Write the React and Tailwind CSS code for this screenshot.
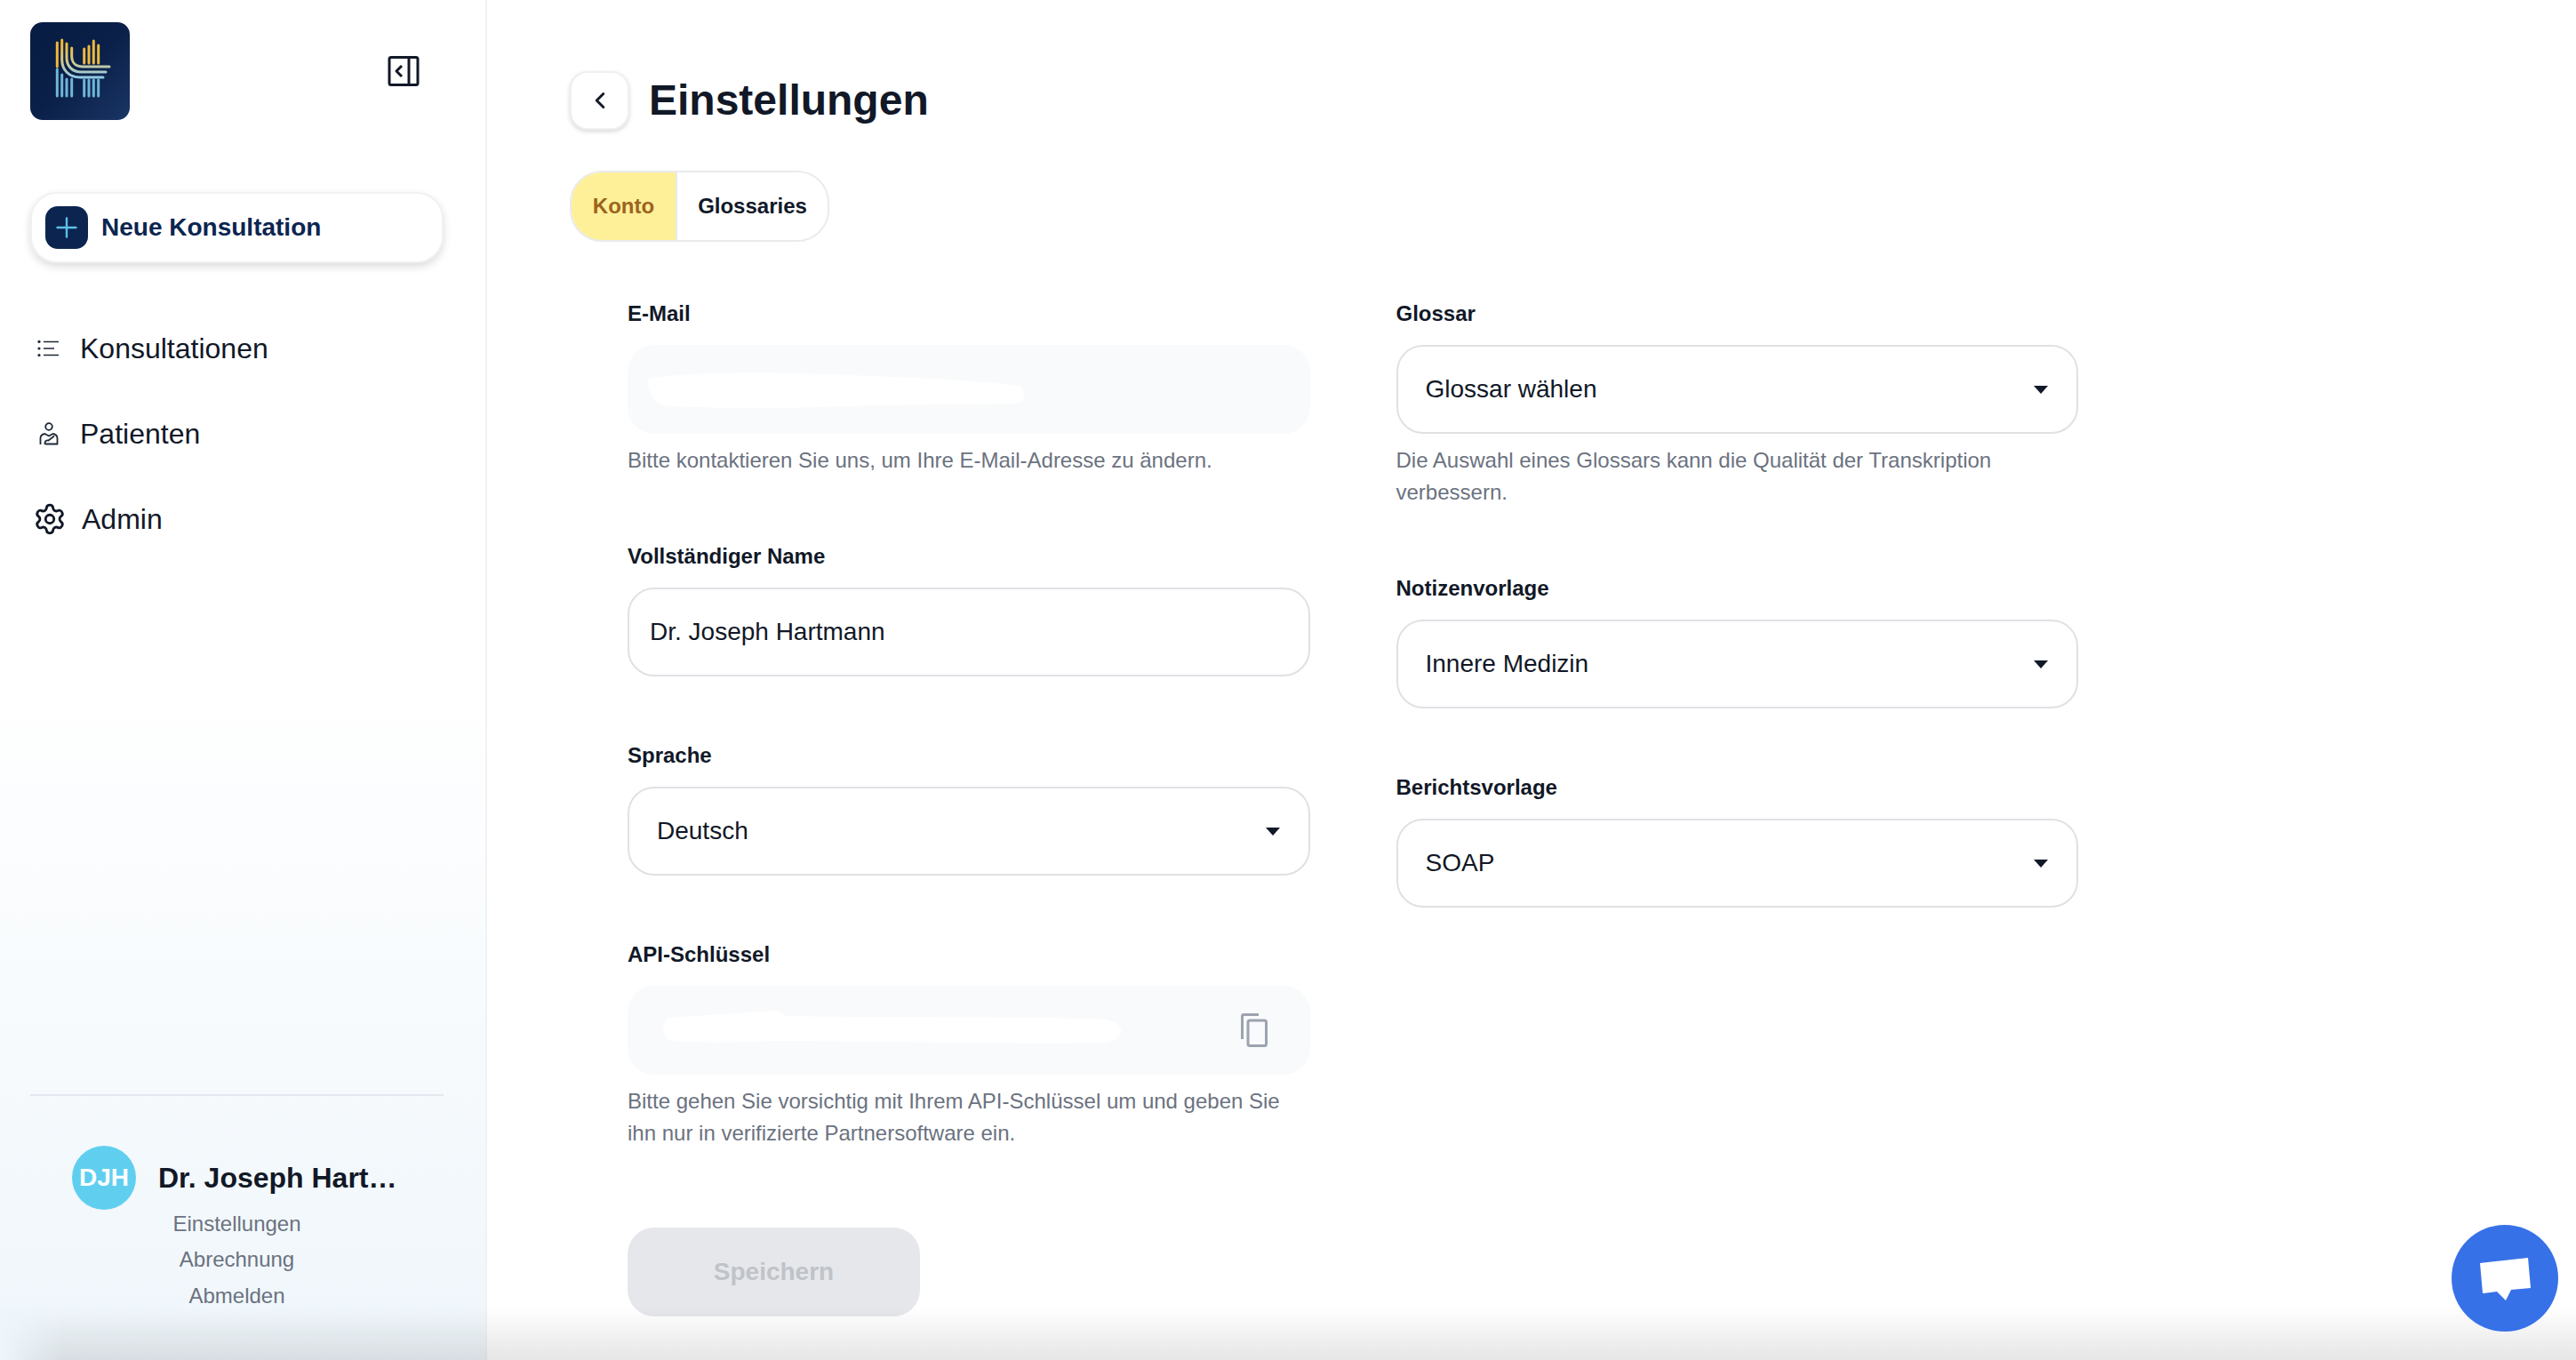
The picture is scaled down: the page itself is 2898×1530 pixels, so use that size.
import React from 'react';
import { Settings, ChevronLeft, Plus } from 'lucide-react';

const Logo = () => (
  <div className="w-[112px] h-[110px] rounded-[14px] bg-gradient-to-br from-[#071c42] via-[#0a2048] to-[#1a3565] shrink-0">
    <svg width="112" height="110" viewBox="0 0 112 110" fill="none" strokeWidth="3" strokeLinecap="round">
      <defs>
        <linearGradient id="logoLine" gradientUnits="userSpaceOnUse" x1="0" y1="22" x2="0" y2="62">
          <stop offset="0" stopColor="#f2b632" />
          <stop offset="0.55" stopColor="#d5c98a" />
          <stop offset="1" stopColor="#8fcbe6" />
        </linearGradient>
      </defs>
      <path d="M30.3 23V50" stroke="#f0b838" />
      <path d="M35.7 20V42C35.7 54 44 62 56 62H82" stroke="url(#logoLine)" />
      <path d="M41 24V40C41 49 47 56 57 56H85" stroke="url(#logoLine)" />
      <path d="M46.7 29V38C46.7 45 51 50 59 50H89" stroke="url(#logoLine)" />
      <path d="M60.7 30V46M66 27V46M71.3 21V46M76.7 26V46" stroke="#eeb93f" />
      <path d="M30.3 53V83M35.7 59V83M41 64V83M46.7 64V83M60.7 65V83M66 65V83M71.3 65V83M76.7 65V83" stroke="#6fb6d8" />
    </svg>
  </div>
);

const CollapseIcon = () => (
  <svg width="36" height="34" viewBox="0 0 36 34" fill="none" stroke="#111827" strokeWidth="3" strokeLinejoin="round">
    <rect x="2" y="1.5" width="32" height="31" rx="2" />
    <path d="M24 2V32" />
    <path d="M16 11L10 17L16 23" />
  </svg>
);

const ListIcon = () => (
  <svg width="24" height="18" viewBox="0 0 24 18" fill="none" stroke="#1f2937" strokeWidth="1.6">
    <circle cx="2" cy="1.5" r="1.6" fill="#1f2937" stroke="none" />
    <circle cx="2" cy="9" r="1.6" fill="#1f2937" stroke="none" />
    <circle cx="2" cy="16.5" r="1.6" fill="#1f2937" stroke="none" />
    <path d="M7 1.5H24M7 9H19M7 16.5H24" />
  </svg>
);

const PatientIcon = () => (
  <svg width="22" height="26" viewBox="0 0 22 26" fill="none" stroke="#1f2937" strokeWidth="1.8" strokeLinejoin="round">
    <circle cx="11" cy="5" r="3.8" />
    <path d="M1.5 25V18C1.5 15 3.5 13.5 6.5 13L11 15.5L15.5 13C18.5 13.5 20.5 15 20.5 18V24.5H7" />
    <path d="M6.5 25C6 21.5 8 20 10.5 20.5L17 15.5" />
  </svg>
);

const CopyIcon = () => (
  <svg width="30" height="38" viewBox="0 0 30 38" fill="none" stroke="#9ca3af" strokeWidth="3">
    <path d="M1.5 29V3C1.5 2 2 1.5 3 1.5H20" />
    <rect x="8" y="8" width="20.5" height="28.5" rx="2" />
  </svg>
);

const ChatIcon = () => (
  <svg width="60" height="52" viewBox="0 0 60 52" fill="white">
    <path d="M2 6L56 0L59 34L37 36L31 48L21 38L5 40Z" />
  </svg>
);

const Caret = () => <span className="w-0 h-0 border-x-[8px] border-x-transparent border-t-[9px] border-t-[#111827]" />;

const Label = ({ children }) => (
  <div className="text-[24px] leading-[36px] font-bold text-[#111827] mb-[17px]">{children}</div>
);

const Help = ({ children }) => (
  <p className="mt-[12px] mb-[1px] text-[24px] leading-[36px] text-[#6b7280]">{children}</p>
);

const SelectField = ({ label, value, help }) => (
  <div>
    <Label>{label}</Label>
    <div className="h-[100px] rounded-[30px] border-2 border-[#dfe1e4] bg-white pl-[31px] pr-[32px] flex items-center justify-between">
      <span className="text-[28px] text-[#111827]">{value}</span>
      <Caret />
    </div>
    {help && <Help>{help}</Help>}
  </div>
);

const navItems = [
  { icon: <ListIcon />, label: 'Konsultationen', box: 'w-[50px] pl-[2px]', gap: 'ml-0' },
  { icon: <PatientIcon />, label: 'Patienten', box: 'w-[50px] pl-[4px]', gap: 'ml-0' },
  { icon: <Settings size={38} strokeWidth={1.8} color="#111827" />, label: 'Admin', box: 'w-[50px] -ml-[3px]', gap: 'ml-[5px]' },
];

const Sidebar = () => (
  <aside className="w-[548px] h-full shrink-0 border-r-2 border-[#f1f2f4] bg-gradient-to-b from-white via-white to-[#eff6fb] pl-[34px] pr-[47px] pt-[25px] flex flex-col">
    <div className="flex items-center justify-between pr-[27px]">
      <Logo />
      <CollapseIcon />
    </div>
    <button className="mt-[81px] h-[80px] w-[465px] rounded-[30px] bg-white border-2 border-[#f1f1f3] shadow-[0_4px_10px_rgba(0,0,0,0.14)] flex items-center pl-[15px] gap-[15px]">
      <span className="w-[48px] h-[48px] rounded-[14px] bg-[#0b2550] flex items-center justify-center">
        <Plus size={36} strokeWidth={1.6} color="#5cc0e6" />
      </span>
      <span className="text-[28px] font-bold text-[#0b2550]">Neue Konsultation</span>
    </button>
    <nav className="mt-[72px] flex flex-col gap-[48px]">
      {navItems.map((item) => (
        <div key={item.label} className="h-[48px] flex items-center pl-[6px] text-[32px] text-[#111827]">
          <span className={item.box + ' flex items-center'}>{item.icon}</span>
          <span className={item.gap}>{item.label}</span>
        </div>
      ))}
    </nav>
    <div className="mt-auto border-t-2 border-[#e2e8ee] pt-[56px] pb-[52px]">
      <div className="flex items-center pl-[47px] gap-[25px]">
        <div className="w-[72px] h-[72px] rounded-full bg-[#60cfef] text-white text-[28px] font-bold flex items-center justify-center">DJH</div>
        <div className="text-[32px] font-bold text-[#111827]">Dr. Joseph Hart…</div>
      </div>
      <div className="-mt-[4px] flex flex-col items-center text-[24px] leading-[40.5px] text-[#6b7280]">
        <span>Einstellungen</span>
        <span>Abrechnung</span>
        <span>Abmelden</span>
      </div>
    </div>
  </aside>
);

const SettingsPage = () => (
  <main className="flex-1 pl-[93px] pt-[80px]">
    <div className="h-[66px] flex items-center gap-[22px]">
      <button className="w-[67px] h-[66px] rounded-[20px] bg-white border-2 border-[#f0f0f2] shadow-[0_2px_5px_rgba(0,0,0,0.16)] flex items-center justify-center">
        <ChevronLeft size={30} strokeWidth={2.4} color="#111827" />
      </button>
      <h1 className="text-[48px] leading-none font-bold text-[#111827] -mt-[1px]">Einstellungen</h1>
    </div>

    <div className="mt-[46px] w-[292px] h-[80px] rounded-[36px] border-2 border-[#e9eaec] overflow-hidden flex text-[24px] font-bold">
      <div className="w-[119px] bg-[#fdf099] text-[#9c6320] flex items-center justify-center border-r-2 border-[#e9eaec]">Konto</div>
      <div className="flex-1 bg-white text-[#111827] flex items-center justify-center">Glossaries</div>
    </div>

    <div className="mt-[63px] ml-[65px] w-[1632px] grid grid-cols-2 gap-x-[97px] items-start">
      <div className="flex flex-col gap-[71px]">
        <div>
          <Label>E-Mail</Label>
          <div className="relative h-[100px] rounded-[30px] bg-[#f9fafb]">
            <svg className="absolute left-[20px] top-[30px]" width="430" height="44" viewBox="0 0 430 44" fill="white">
              <path d="M4 8C30 2 120 0 170 2C230 4 360 8 420 16C428 20 428 32 420 36L250 38C180 42 60 42 20 38C8 34 0 16 4 8Z" />
            </svg>
          </div>
          <Help>Bitte kontaktieren Sie uns, um Ihre E-Mail-Adresse zu ändern.</Help>
        </div>
        <div>
          <Label>Vollständiger Name</Label>
          <div className="h-[100px] rounded-[30px] border-2 border-[#dfe1e4] bg-white pl-[23px] flex items-center text-[28px] text-[#111827]">
            Dr. Joseph Hartmann
          </div>
        </div>
        <SelectField label="Sprache" value="Deutsch" />
        <div>
          <Label>API-Schlüssel</Label>
          <div className="relative h-[100px] rounded-[30px] bg-[#f9fafb] flex items-center justify-end pr-[48px]">
            <svg className="absolute left-[38px] top-[28px]" width="520" height="42" viewBox="0 0 520 42" fill="white">
              <path d="M8 8L130 0L140 6C240 8 400 6 500 10C522 14 524 32 500 36C400 38 240 34 120 34C80 36 30 36 10 34C0 28 0 14 8 8Z" />
            </svg>
            <CopyIcon />
          </div>
          <Help>Bitte gehen Sie vorsichtig mit Ihrem API-Schlüssel um und geben Sie ihn nur in verifizierte Partnersoftware ein.</Help>
        </div>
        <button className="mt-[16px] w-[329px] h-[100px] rounded-[30px] bg-[#e5e7eb] text-[#c0c3c8] text-[28px] font-bold">Speichern</button>
      </div>

      <div className="flex flex-col gap-[71px]">
        <SelectField label="Glossar" value="Glossar wählen" help="Die Auswahl eines Glossars kann die Qualität der Transkription verbessern." />
        <SelectField label="Notizenvorlage" value="Innere Medizin" />
        <SelectField label="Berichtsvorlage" value="SOAP" />
      </div>
    </div>
  </main>
);

export default function App() {
  return (
    <div className="relative h-screen w-full overflow-hidden bg-white flex font-['Liberation_Sans',Arial,sans-serif]">
      <Sidebar />
      <SettingsPage />
      {/* soft fade along the bottom edge, lighter in the left corner */}
      <div className="absolute inset-x-0 bottom-0 h-[60px] bg-gradient-to-t from-black/10 to-transparent pointer-events-none" />
      <div className="absolute left-0 bottom-0 w-[70px] h-[60px] bg-gradient-to-r from-[#eff6fb] to-transparent pointer-events-none" />
      <button className="absolute right-[20px] bottom-[32px] w-[120px] h-[120px] rounded-full bg-[#3771e8] flex items-center justify-center pt-[6px]">
        <ChatIcon />
      </button>
    </div>
  );
}
